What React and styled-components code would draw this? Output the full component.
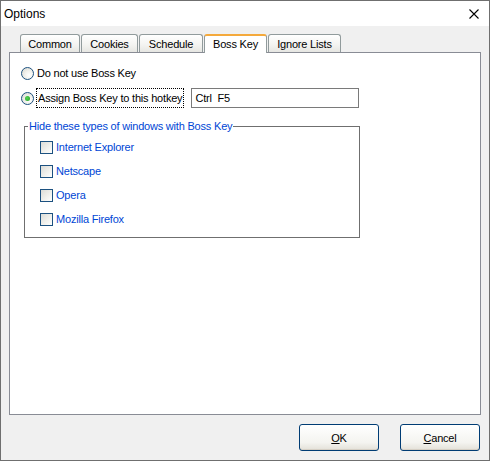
import React from "react";
import styled, { createGlobalStyle } from "styled-components";

const Global = createGlobalStyle`
  html, body { margin: 0; padding: 0; background: #ffffff; }
  * { box-sizing: border-box; }
`;

const Window = styled.div`
  width: 490px;
  height: 461px;
  border: 1px solid #6f6f6f;
  background: #f0f0f0;
  display: flex;
  flex-direction: column;
  font-family: "Liberation Sans", Arial, sans-serif;
  font-size: 11px;
  letter-spacing: -0.2px;
  color: #000;
`;

const TitleBar = styled.div`
  height: 25px;
  background: #ffffff;
  display: flex;
  align-items: center;
  justify-content: space-between;
  padding: 0 10px 0 3px;
`;

const Title = styled.span`
  font-size: 12px;
  letter-spacing: 0;
  margin-top: 1px;
`;

const CloseIcon = styled.svg`
  width: 10px;
  height: 10px;
  margin-top: 1px;
`;

const Body = styled.div`
  flex: 1;
  display: flex;
  flex-direction: column;
  padding: 8px 8px 9px 8px;
`;

const TabRow = styled.div`
  display: flex;
  align-items: flex-end;
  gap: 1px;
  padding-left: 11px;
  height: 18px;
`;

const Tab = styled.div`
  width: ${(p) => p.$w}px;
  height: ${(p) => (p.$active ? 19 : 18)}px;
  margin-bottom: ${(p) => (p.$active ? -1 : 0)}px;
  position: relative;
  z-index: ${(p) => (p.$active ? 2 : 1)};
  border: 1px solid #919b9c;
  border-bottom: none;
  border-top: ${(p) => (p.$active ? "2px solid #f4a93c" : "1px solid #919b9c")};
  border-radius: 3px 3px 0 0;
  background: ${(p) =>
    p.$active ? "#ffffff" : "linear-gradient(#ffffff, #f3f3f0 60%, #e6e6e2)"};
  display: flex;
  align-items: center;
  justify-content: center;
  padding-bottom: ${(p) => (p.$active ? 1 : 0)}px;
`;

const Panel = styled.div`
  height: 363px;
  background: #ffffff;
  border: 1px solid #898c95;
  display: flex;
  flex-direction: column;
  padding: 0 0 0 11px;
`;

const OptionRow = styled.div`
  height: 20px;
  margin-top: ${(p) => p.$mt}px;
  display: flex;
  align-items: center;
`;

const Radio = styled.span`
  width: 13px;
  height: 13px;
  border-radius: 50%;
  border: 1px solid #1c5180;
  background: radial-gradient(circle at 65% 65%, #ffffff 0%, #f2f2ee 40%, #d4d4cb 100%);
  display: inline-flex;
  align-items: center;
  justify-content: center;
  flex-shrink: 0;
  &::after {
    content: "";
    display: ${(p) => (p.$checked ? "block" : "none")};
    width: 5px;
    height: 5px;
    border-radius: 50%;
    background: radial-gradient(circle at 40% 40%, #55d255, #21a121);
  }
`;

const RadioLabel = styled.span`
  margin-left: ${(p) => (p.$focus ? 2 : 3)}px;
  height: 20px;
  display: inline-flex;
  align-items: center;
  padding: 0 ${(p) => (p.$focus ? 1 : 0)}px;
  border: ${(p) => (p.$focus ? "1px dotted #000" : "none")};
`;

const HotkeyBox = styled.div`
  margin-left: 7px;
  width: 168px;
  height: 20px;
  border: 1px solid #7a7a7a;
  display: flex;
  align-items: center;
  padding-left: 3px;
  white-space: pre;
`;

const Group = styled.div`
  position: relative;
  margin-top: 18px;
  margin-left: 3px;
  width: 336px;
  height: 112px;
  border: 1px solid #6f6f6f;
  padding: 10px 0 0 15px;
  display: flex;
  flex-direction: column;
  gap: 4px;
`;

const GroupTitle = styled.span`
  position: absolute;
  top: -8px;
  left: 3px;
  padding: 0 1px;
  background: #ffffff;
  color: #0046d5;
  line-height: 14px;
`;

const CheckRow = styled.div`
  height: 20px;
  display: flex;
  align-items: center;
`;

const CheckBox = styled.span`
  width: 13px;
  height: 13px;
  border: 1px solid #1c5180;
  background: linear-gradient(135deg, #dcdcd7 0%, #f0f0ec 55%, #ffffff 100%);
  flex-shrink: 0;
`;

const CheckLabel = styled.span`
  margin-left: 3px;
  color: #0046d5;
`;

const ButtonRow = styled.div`
  margin-top: 9px;
  display: flex;
  justify-content: flex-end;
  gap: 21px;
  padding-right: 1px;
`;

const Button = styled.button`
  width: 80px;
  height: 27px;
  border: 1px solid #003c74;
  border-radius: 3px;
  background: linear-gradient(#ffffff, #f4f4f0 70%, #e3e1d8);
  font-family: inherit;
  font-size: 11px;
  letter-spacing: -0.2px;
  color: #000;
  padding: 0;
  display: flex;
  align-items: center;
  justify-content: center;
  box-shadow: inset 0 -1px 0 #d6d0c5;
  & u { text-decoration: underline; }
`;

const tabs = [
  { label: "Common", w: 60 },
  { label: "Cookies", w: 57 },
  { label: "Schedule", w: 64 },
  { label: "Boss Key", w: 63, active: true },
  { label: "Ignore Lists", w: 73 },
];

const browsers = ["Internet Explorer", "Netscape", "Opera", "Mozilla Firefox"];

export default function App() {
  return (
    <>
      <Global />
      <Window>
        <TitleBar>
          <Title>Options</Title>
          <CloseIcon viewBox="0 0 10 10">
            <path d="M0.5 0.5 L9.5 9.5 M9.5 0.5 L0.5 9.5" stroke="#000" strokeWidth="1.1" fill="none" />
          </CloseIcon>
        </TitleBar>
        <Body>
          <TabRow>
            {tabs.map((t) => (
              <Tab key={t.label} $w={t.w} $active={t.active}>
                {t.label}
              </Tab>
            ))}
          </TabRow>
          <Panel>
            <OptionRow $mt={10}>
              <Radio />
              <RadioLabel>Do not use Boss Key</RadioLabel>
            </OptionRow>
            <OptionRow $mt={5}>
              <Radio $checked />
              <RadioLabel $focus>Assign Boss Key to this hotkey</RadioLabel>
              <HotkeyBox>Ctrl  F5</HotkeyBox>
            </OptionRow>
            <Group>
              <GroupTitle>Hide these types of windows with Boss Key</GroupTitle>
              {browsers.map((b) => (
                <CheckRow key={b}>
                  <CheckBox />
                  <CheckLabel>{b}</CheckLabel>
                </CheckRow>
              ))}
            </Group>
          </Panel>
          <ButtonRow>
            <Button>
              <u>O</u>K
            </Button>
            <Button>
              <u>C</u>ancel
            </Button>
          </ButtonRow>
        </Body>
      </Window>
    </>
  );
}
